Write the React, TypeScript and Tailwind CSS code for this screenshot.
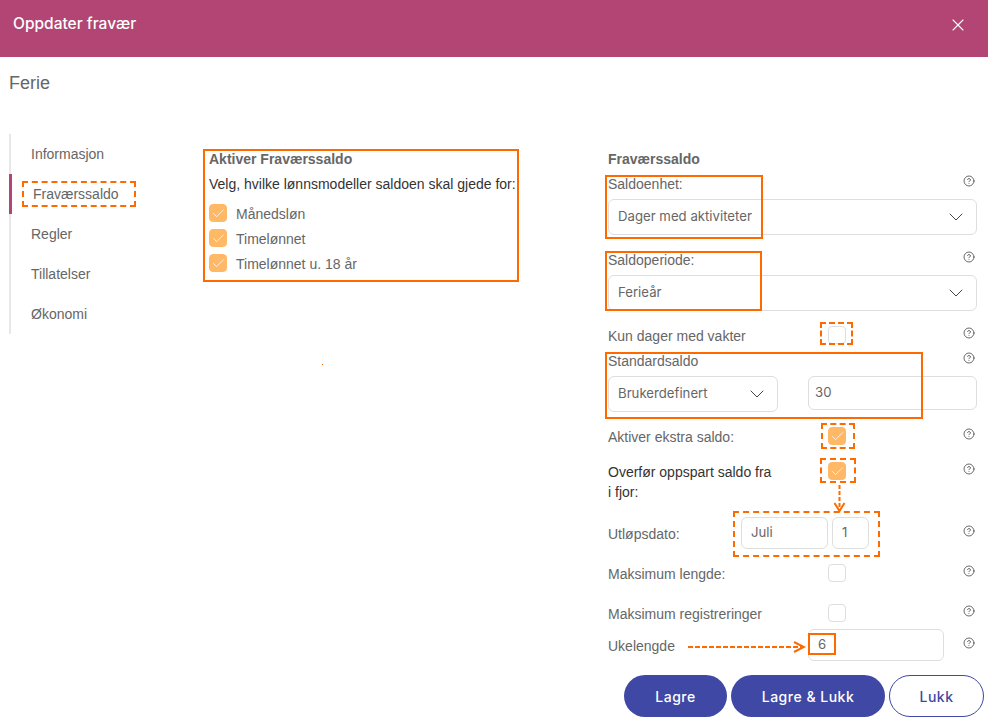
import { ChevronDown, CircleHelp, X, Check } from "lucide-react";
import type { ReactNode } from "react";

const arial = "font-['Liberation_Sans',Arial,sans-serif]";
const inter = "font-['Inter',sans-serif]";

function Help({ className = "mt-[1px]" }: { className?: string }) {
  return <CircleHelp size={12} strokeWidth={1.6} className={`mr-[2px] ml-auto shrink-0 text-[#444] ${className}`} />;
}

function Box({ on = false, className = "" }: { on?: boolean; className?: string }) {
  return (
    <span
      className={`flex h-[18px] w-[18px] shrink-0 items-center justify-center rounded-[4px] border ${
        on ? "border-[#ffb866] bg-[#ffb866]" : "border-[#dedede] bg-white"
      } ${className}`}
    >
      {on && <Check size={15} strokeWidth={1.2} className="text-white" />}
    </span>
  );
}

function Label({ children }: { children: ReactNode }) {
  return <div className={`${arial} h-5 text-[14px] leading-5 text-[#666]`}>{children}</div>;
}

function Select({ text, className = "" }: { text: string; className?: string }) {
  return (
    <div
      className={`${inter} flex h-9 items-center justify-between rounded-[6px] border border-[#dedede] pr-[8px] pl-[9px] text-[13.2px] text-[#666] ${className}`}
    >
      <span>{text}</span>
      <ChevronDown size={24} strokeWidth={1} className="text-[#444]" />
    </div>
  );
}

function CheckRow({ label, on, top, dark }: { label: ReactNode; on?: boolean; top: string; dark?: boolean }) {
  return (
    <div className={`flex items-start ${top}`}>
      <div className={`${arial} w-[220px] text-[14px] leading-5 ${dark ? "text-[#333]" : "text-[#666]"}`}>{label}</div>
      <Box on={on} />
      <Help />
    </div>
  );
}

function Side({ text, active }: { text: string; active?: boolean }) {
  return (
    <div
      className={`flex h-10 items-center text-[14px] text-[#666] ${
        active ? "-ml-[2px] border-l-[3px] border-[#b24573] pl-[21px]" : "pl-5"
      }`}
    >
      {text}
    </div>
  );
}

function Mark({ className }: { className: string }) {
  return <div className={`pointer-events-none absolute border-[#ff6a00] ${className}`} />;
}

export default function App() {
  return (
    <div className={`${arial} relative h-[726px] w-[988px] overflow-hidden bg-white`}>
      <header className="flex h-[57px] items-start justify-between bg-[#b24573] pt-[15px] pr-[20px] pl-[13px] text-white">
        <span className={`${inter} text-[15.5px] leading-[18px] font-medium`}>Oppdater fravær</span>
        <X size={20} strokeWidth={1.3} />
      </header>

      <div className="h-[77px] pt-4 pl-[9px] text-[18px] leading-5 text-[#666]">Ferie</div>

      <div className="flex items-start">
        <nav className="ml-[9px] w-[200px] shrink-0">
          <div className="w-[150px] border-l-2 border-[#e8e8e8]">
            <Side text="Informasjon" />
            <Side text="Fraværssaldo" active />
            <Side text="Regler" />
            <Side text="Tillatelser" />
            <Side text="Økonomi" />
          </div>
        </nav>

        <section className="mt-[15px] w-[399px] shrink-0">
          <div className="text-[14px] leading-5 font-bold text-[#666]">Aktiver Fraværssaldo</div>
          <div className="mt-[5px] text-[14px] leading-5 text-[#333]">Velg, hvilke lønnsmodeller saldoen skal gjede for:</div>
          <div className="mt-[10px] flex flex-col gap-[7px]">
            {["Månedsløn", "Timelønnet", "Timelønnet u. 18 år"].map((t) => (
              <div key={t} className="flex h-[18px] items-center gap-[9px] text-[14px] text-[#666]">
                <Box on />
                <span className="pt-[2px]">{t}</span>
              </div>
            ))}
          </div>
        </section>

        <section className="mt-[15px] w-[369px] shrink-0">
          <div className="text-[14px] leading-5 font-bold text-[#666]">Fraværssaldo</div>

          <div className="mt-[5px] flex items-start">
            <Label>Saldoenhet:</Label>
            <Help />
          </div>
          <Select text="Dager med aktiviteter" className="mt-[5px]" />

          <div className="mt-[15px] flex items-start">
            <Label>Saldoperiode:</Label>
            <Help />
          </div>
          <Select text="Ferieår" className="mt-[5px]" />

          <CheckRow label="Kun dager med vakter" top="mt-[15px]" />

          <div className="mt-[5px] flex items-start">
            <Label>Standardsaldo</Label>
            <Help />
          </div>
          <div className="mt-[5px] flex items-start">
            <Select text="Brukerdefinert" className="w-[170px]" />
            <div className={`${inter} ml-[30px] flex h-[34px] w-[169px] items-center rounded-[6px] border border-[#dedede] pl-[6px] text-[13.2px] text-[#666]`}>
              30
            </div>
          </div>

          <CheckRow label="Aktiver ekstra saldo:" on top="mt-[15px]" />
          <CheckRow
            label={
              <>
                Overfør oppspart saldo fra
                <br />i fjor:
              </>
            }
            on
            dark
            top="mt-[15px]"
          />

          <div className="mt-[15px] flex h-[32px] items-start">
            <div className="mt-[7px] w-[133px] text-[14px] leading-5 text-[#666]">Utløpsdato:</div>
            <div className={`${inter} flex h-[32px] w-[87px] items-center rounded-[6px] border border-[#dedede] pl-[9px] text-[13.2px] text-[#666]`}>
              Juli
            </div>
            <div className={`${inter} ml-[4px] flex h-[32px] w-[37px] items-center rounded-[6px] border border-[#dedede] pl-[9px] text-[13.2px] text-[#666]`}>
              1
            </div>
            <Help className="mt-[8px]" />
          </div>

          <CheckRow label="Maksimum lengde:" top="mt-[15px]" />
          <CheckRow label="Maksimum registreringer" top="mt-[20px]" />

          <div className="mt-[5px] flex h-[32px] items-start">
            <div className="mt-[7px] w-[200px] text-[14px] leading-5 text-[#666]">Ukelengde</div>
            <div className={`${inter} flex h-[32px] w-[136px] items-center rounded-[6px] border border-[#dedede] pl-[9px] text-[13.2px] text-[#666]`}>
              6
            </div>
            <Help className="mt-[8px]" />
          </div>

          <div className={`${inter} mt-[14px] -mr-[7px] flex justify-end gap-1 text-[14px] font-medium tracking-[0.5px]`}>
            <button className="h-[42px] w-[103px] rounded-full bg-[#3f48a4] text-white">Lagre</button>
            <button className="h-[42px] w-[154px] rounded-full bg-[#3f48a4] text-white">Lagre & Lukk</button>
            <button className="h-[42px] w-[95px] rounded-full border border-[#3f48a4] bg-white text-[#3f48a4]">Lukk</button>
          </div>
        </section>
      </div>

      <Mark className="top-[181px] left-[22px] h-[26px] w-[114px] border-2 border-dashed" />
      <Mark className="top-[149px] left-[203px] h-[133px] w-[316px] border-2" />
      <Mark className="top-[175px] left-[605px] h-[64px] w-[158px] border-2" />
      <Mark className="top-[251px] left-[605px] h-[60px] w-[157px] border-2" />
      <Mark className="top-[352px] left-[605px] h-[67px] w-[318px] border-2" />
      <Mark className="top-[322px] left-[820px] h-[23px] w-[33px] border-2 border-dashed" />
      <Mark className="top-[423px] left-[821px] h-[26px] w-[34px] border-2 border-dashed" />
      <Mark className="top-[458px] left-[820px] h-[25px] w-[36px] border-2 border-dashed" />
      <Mark className="top-[511px] left-[733px] h-[46px] w-[147px] border-2 border-dashed" />
      <Mark className="top-[633px] left-[808px] h-[22px] w-[28px] border-2" />
      <div className="absolute top-[364px] left-[322px] h-px w-px bg-[#ff6a00]" />

      <svg className="pointer-events-none absolute top-[484px] left-[832px]" width="16" height="28" fill="none" stroke="#ff6a00" strokeWidth="2">
        <path d="M7.5 1V26" strokeDasharray="4 2" />
        <path d="M2.5 19L7.5 27L12.5 19" />
      </svg>
      <svg className="pointer-events-none absolute top-[640px] left-[688px]" width="118" height="14" fill="none" stroke="#ff6a00" strokeWidth="2">
        <path d="M0 7H114" strokeDasharray="5 2" />
        <path d="M106 2L116 7L106 12" />
      </svg>
    </div>
  );
}
